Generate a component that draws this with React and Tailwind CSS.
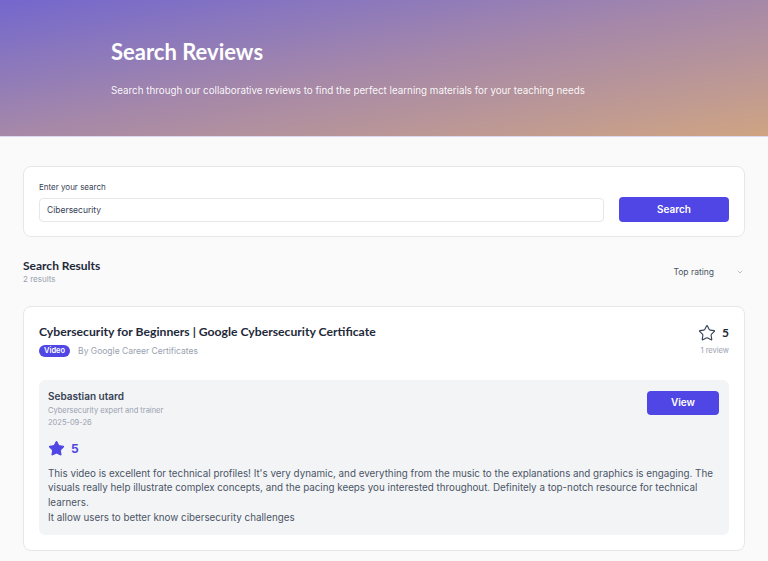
import { Star, ChevronDown } from 'lucide-react';

const heading = "font-['Lato','Noto_Sans',sans-serif]";

function ReviewCard() {
  return (
    <div className="rounded-lg border border-gray-200 bg-white px-[15px] pt-4 pb-[15px]">
      <div className="flex items-start justify-between">
        <div>
          <h3 className={`${heading} text-[12.2px] font-bold leading-[18px] text-gray-800`}>
            Cybersecurity for Beginners | Google Cybersecurity Certificate
          </h3>
          <div className="mt-[4px] flex items-center gap-2">
            <span className="rounded-full bg-[#4f46e5] px-[5px] py-[1px] text-[7.5px] font-semibold leading-[10px] text-white">Video</span>
            <span className="text-[8.5px] text-gray-400">By Google Career Certificates</span>
          </div>
        </div>
        <div className="flex flex-col items-end pt-[1px]">
          <div className="flex items-center gap-[6px]">
            <Star className="h-[18px] w-[18px] text-gray-700" strokeWidth={1.5} />
            <span className={`${heading} text-[12px] font-bold text-gray-800`}>5</span>
          </div>
          <span className="mt-[3px] text-[7.5px] text-gray-400">1 review</span>
        </div>
      </div>

      <div className="mt-[22px] rounded-md bg-[#f3f4f6] px-[9px] pt-[9px] pb-[9px]">
        <div className="flex items-start justify-between">
          <div>
            <div className="text-[10px] font-semibold leading-[14px] text-gray-700">Sebastian utard</div>
            <div className="mt-[2px] text-[7.5px] leading-[11px] text-gray-400">Cybersecurity expert and trainer</div>
            <div className="mt-[1px] text-[7.5px] leading-[11px] text-gray-400">2025-09-26</div>
          </div>
          <button className="mt-[2px] mr-[1px] h-[24px] w-[72px] rounded bg-[#4f46e5] text-[10px] font-semibold text-white">View</button>
        </div>
        <div className="mt-[12px] flex items-center gap-[6px]">
          <Star className="h-[17px] w-[17px] fill-[#4f46e5] text-[#4f46e5]" strokeWidth={1.5} />
          <span className="text-[12px] font-bold text-[#4f46e5]">5</span>
        </div>
        <p className="mt-[9px] text-[9.8px] leading-[14.7px] text-gray-600">
          This video is excellent for technical profiles! It's very dynamic, and everything from the music to the explanations and graphics is engaging. The visuals really help illustrate complex concepts, and the pacing keeps you interested throughout. Definitely a top-notch resource for technical learners.
          <br />
          It allow users to better know cibersecurity challenges
        </p>
      </div>
    </div>
  );
}

export default function App() {
  return (
    <div className="min-h-[561px] bg-[#fafafa] font-['Inter','Noto_Sans',sans-serif]">
      <header className="h-[137px] border-b border-[#ded7f0] bg-gradient-to-br from-[#7466cd] via-[#a688a8] to-[#cfa482] px-[111px] pt-[37px]">
        <h1 className={`${heading} text-[22px] font-bold leading-[30px] text-white`}>Search Reviews</h1>
        <p className="mt-[17px] text-[9.8px] text-white/95">
          Search through our collaborative reviews to find the perfect learning materials for your teaching needs
        </p>
      </header>

      <main className="px-[23px] pt-[29px]">
        <div className="rounded-lg border border-gray-200 bg-white px-[15px] pt-[14px] pb-[14px]">
          <label className="block text-[8px] leading-[12px] text-gray-700">Enter your search</label>
          <div className="mt-[4px] flex items-center gap-[15px]">
            <input
              readOnly
              value="Cibersecurity"
              className="h-[24px] flex-1 rounded border border-gray-200 px-[7px] text-[8.5px] text-gray-700 outline-none"
            />
            <button className="h-[25px] w-[110px] rounded bg-[#4f46e5] text-[10px] font-semibold text-white">Search</button>
          </div>
        </div>

        <div className="mt-[21px] flex items-start justify-between">
          <div>
            <h2 className={`${heading} text-[12px] font-bold leading-[16px] text-gray-800`}>Search Results</h2>
            <span className="block text-[8px] leading-[11px] text-gray-400">2 results</span>
          </div>
          <div className="mt-[8px] flex items-center gap-[22px] pr-[1px]">
            <span className="text-[8.5px] text-gray-600">Top rating</span>
            <ChevronDown className="h-[8px] w-[8px] text-gray-400" />
          </div>
        </div>

        <div className="mt-[21px]">
          <ReviewCard />
        </div>
      </main>
    </div>
  );
}
